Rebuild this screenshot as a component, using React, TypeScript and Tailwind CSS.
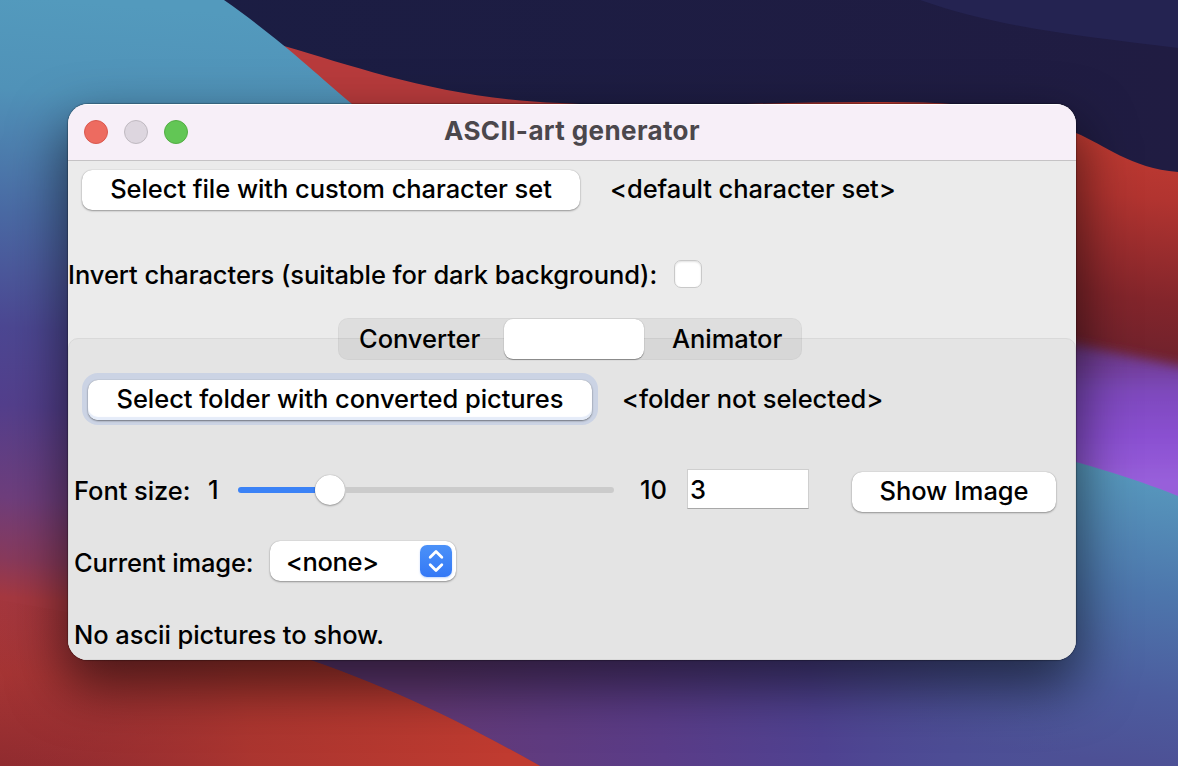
import type { ReactNode } from "react";

function Wallpaper() {
  return (
    <svg className="absolute inset-0 h-full w-full" viewBox="0 0 1178 766" preserveAspectRatio="none" aria-hidden="true">
      <defs>
        <linearGradient id="left" gradientUnits="userSpaceOnUse" x1="60" y1="0" x2="0" y2="766">
          <stop offset="0" stopColor="#539abd" />
          <stop offset="0.12" stopColor="#5092b8" />
          <stop offset="0.28" stopColor="#4a6aa4" />
          <stop offset="0.43" stopColor="#4c4792" />
          <stop offset="0.53" stopColor="#533f8c" />
          <stop offset="0.65" stopColor="#6e3e7c" />
          <stop offset="0.73" stopColor="#883a5c" />
          <stop offset="0.78" stopColor="#a53840" />
          <stop offset="0.88" stopColor="#a63534" />
          <stop offset="1" stopColor="#902b2f" />
        </linearGradient>
        <linearGradient id="lowred" gradientUnits="userSpaceOnUse" x1="0" y1="766" x2="500" y2="700">
          <stop offset="0" stopColor="#962d33" stopOpacity="0" />
          <stop offset="0.5" stopColor="#b0372f" stopOpacity="0.8" />
          <stop offset="1" stopColor="#c03b30" />
        </linearGradient>
        <linearGradient id="navy" x1="0" y1="0" x2="1" y2="0">
          <stop offset="0" stopColor="#1b1d43" />
          <stop offset="1" stopColor="#201c42" />
        </linearGradient>
        <linearGradient id="red" gradientUnits="userSpaceOnUse" x1="1110" y1="130" x2="1080" y2="380">
          <stop offset="0" stopColor="#c03b32" />
          <stop offset="0.25" stopColor="#b23430" />
          <stop offset="0.65" stopColor="#83252b" />
          <stop offset="1" stopColor="#66202d" />
        </linearGradient>
        <linearGradient id="violet" gradientUnits="userSpaceOnUse" x1="0" y1="345" x2="0" y2="480">
          <stop offset="0" stopColor="#693680" />
          <stop offset="0.35" stopColor="#7e49bd" />
          <stop offset="0.7" stopColor="#8b50d2" />
          <stop offset="1" stopColor="#985fda" />
        </linearGradient>
        <linearGradient id="blue" gradientUnits="userSpaceOnUse" x1="1178" y1="480" x2="1140" y2="766">
          <stop offset="0" stopColor="#5798bd" />
          <stop offset="0.4" stopColor="#4d76ac" />
          <stop offset="0.75" stopColor="#4c5c9e" />
          <stop offset="1" stopColor="#4d5095" />
        </linearGradient>
        <linearGradient id="lowpurple" gradientUnits="userSpaceOnUse" x1="440" y1="766" x2="1060" y2="640">
          <stop offset="0" stopColor="#643a78" />
          <stop offset="0.35" stopColor="#5a3c88" />
          <stop offset="0.6" stopColor="#4f4291" />
          <stop offset="1" stopColor="#4b5299" stopOpacity="0" />
        </linearGradient>
        <filter id="soft" x="-20%" y="-20%" width="140%" height="140%">
          <feGaussianBlur stdDeviation="6" />
        </filter>
      </defs>
      <rect width="1178" height="766" fill="url(#red)" />
      <path d="M240 30 H560 V120 H240 Z" fill="#b83b3c" />
      <path d="M900 325 C1000 325 1090 348 1200 370 V520 H900 Z" fill="url(#violet)" filter="url(#soft)" />
      <path d="M200 0 L284 46 C360 68 445 99 560 103 C670 109 760 102 870 102 C960 101 1030 108 1076 133 C1105 145 1130 168 1178 172 V0 Z" fill="url(#navy)" />
      <path d="M920 0 C1000 28 1080 36 1178 48 V0 Z" fill="#242351" />
      <path d="M240 640 L900 430 C990 436 1100 465 1178 496 V766 H240 Z" fill="url(#blue)" />
      <path d="M240 640 L900 430 C990 436 1100 465 1178 496 V766 H240 Z" fill="url(#lowpurple)" />
      <path d="M0 0 H224 C285 43 315 73 352 104 L400 300 L280 650 C375 680 455 718 540 766 H0 Z" fill="url(#left)" />
      <path d="M0 600 L280 650 C375 680 455 718 540 766 H0 Z" fill="url(#lowred)" />
    </svg>
  );
}

function PushButton({ className, children }: { className: string; children: ReactNode }) {
  return (
    <button
      className={`flex h-10 shrink-0 items-center justify-center whitespace-nowrap rounded-[10px] bg-white pb-[2px] ${className}`}
    >
      {children}
    </button>
  );
}

export default function App() {
  return (
    <div className="relative h-[766px] w-[1178px] overflow-hidden bg-[#1b1d43] font-['Inter',sans-serif] text-[25.5px] font-[450] leading-8 tracking-[-0.06px] text-black">
      <Wallpaper />
      <div className="relative pl-[68px] pt-[104px]">
        <main className="flex h-[556px] w-[1008px] flex-col overflow-hidden rounded-[20px] bg-[#ebebeb] shadow-[0_0_1px_1px_rgba(0,0,0,0.25),0_24px_54px_4px_rgba(0,0,0,0.55)]">
          <header className="grid h-[57px] shrink-0 grid-cols-[120px_1fr_120px] items-center border-b border-[#c5c3c5] bg-[#f7eff8] shadow-[inset_0_1px_0_#fff]">
            <div className="flex gap-4 pl-4">
              <span className="size-6 shrink-0 rounded-full border border-[#d9584e] bg-[#ed6b60]" />
              <span className="size-6 shrink-0 rounded-full border border-[#bfb9c0] bg-[#ddd6df]" />
              <span className="size-6 shrink-0 rounded-full border border-[#53ad44] bg-[#62c655]" />
            </div>
            <h1 className="pb-[2px] text-center text-[26px] font-bold tracking-[0.38px] text-[#4b474c]">ASCII-art generator</h1>
          </header>

          <section className="flex h-[177px] shrink-0 flex-col">
            <div className="flex items-center gap-[30px] pl-[14px] pt-[9px]">
              <PushButton className="w-[498px] shadow-[0_0_1px_rgba(0,0,0,0.3),0_1px_2px_rgba(0,0,0,0.35)]">
                Select file with custom character set
              </PushButton>
              <span className="whitespace-nowrap pb-[2px]">&lt;default character set&gt;</span>
            </div>
            <label className="mt-[49px] flex items-center">
              <span className="w-[606px] whitespace-nowrap">Invert characters (suitable for dark background):</span>
              <input
                type="checkbox"
                className="mb-[3px] size-7 appearance-none rounded-[7px] border border-[#c9c9c9] bg-white shadow-[inset_0_1px_2px_rgba(0,0,0,0.12)]"
              />
            </label>
          </section>

          <section className="relative flex grow flex-col rounded-t-[10px] border border-[#d9d9d9] bg-[#e4e4e4]">
            <nav className="absolute left-[269px] top-[-21px] flex h-[42px] w-[464px] items-center rounded-[10px] border border-black/[0.03] bg-black/[0.055]">
              <span className="w-[165px] pl-5">Converter</span>
              <span className="h-10 w-[140px] rounded-[9px] bg-white shadow-[0_0_1px_rgba(0,0,0,0.3),0_1px_1px_rgba(0,0,0,0.35)]" />
              <span className="pl-7">Animator</span>
            </nav>

            <div className="flex items-center gap-[30px] pl-[19px] pt-[41px]">
              <PushButton className="w-[504px] shadow-[inset_0_-3px_1px_#e5ecf9,0_0_1px_rgba(0,0,0,0.25),0_1px_2px_rgba(0,0,0,0.45),0_-1px_0_5px_#cbd3e4,0_-1px_0_6px_#cbd3e4]">
                Select folder with converted pictures
              </PushButton>
              <span className="whitespace-nowrap pb-[2px]">&lt;folder not selected&gt;</span>
            </div>

            <div className="mt-[46px] flex h-12 items-center pl-[5px]">
              <span className="w-[134px] pt-[1px]">Font size:</span>
              <span className="w-[30px]">1</span>
              <div className="flex w-[376px] items-center">
                <div className="h-[6px] w-[77px] rounded-l-full bg-[#3b82f6]" />
                <div className="size-[30px] shrink-0 rounded-full bg-white shadow-[0_0_1px_rgba(0,0,0,0.35),0_1px_2px_rgba(0,0,0,0.3)]" />
                <div className="h-[6px] grow rounded-r-full bg-[#cbcbcb]" />
              </div>
              <span className="ml-[26px] w-[47px]">10</span>
              <input
                defaultValue="3"
                className="mb-[2px] h-10 w-[122px] border border-[#cfcfcf] border-b-[#a8a8a8] bg-white pl-[2px] pt-[1px] outline-none"
              />
              <PushButton className="ml-[43px] mt-1 w-[204px] shadow-[0_0_1px_rgba(0,0,0,0.3),0_1px_2px_rgba(0,0,0,0.35)]">
                Show Image
              </PushButton>
            </div>

            <div className="mt-[27px] flex items-center pl-[5px]">
              <span className="w-[196px] pt-1 tracking-[-0.15px]">Current image:</span>
              <button className="flex h-10 w-[186px] items-center justify-between rounded-[10px] bg-white pl-4 pr-1 shadow-[0_0_1px_rgba(0,0,0,0.3),0_1px_2px_rgba(0,0,0,0.35)]">
                <span className="pt-[2px] tracking-[-0.4px]">&lt;none&gt;</span>
                <span className="size-8 rounded-[7px] bg-gradient-to-b from-[#4b91f8] to-[#3478f6] shadow-[0_1px_2px_rgba(52,120,246,0.3)]">
                  <svg viewBox="0 0 32 32" className="size-8" fill="none" stroke="white" strokeWidth="2.8" strokeLinecap="round" strokeLinejoin="round">
                    <path d="M10.2 12.2 16 6.5l5.8 5.7M10.2 19.8 16 25.5l5.8-5.7" />
                  </svg>
                </span>
              </button>
            </div>

            <p className="mt-[38px] whitespace-nowrap pl-[5px]">No ascii pictures to show.</p>
          </section>
        </main>
      </div>
    </div>
  );
}
